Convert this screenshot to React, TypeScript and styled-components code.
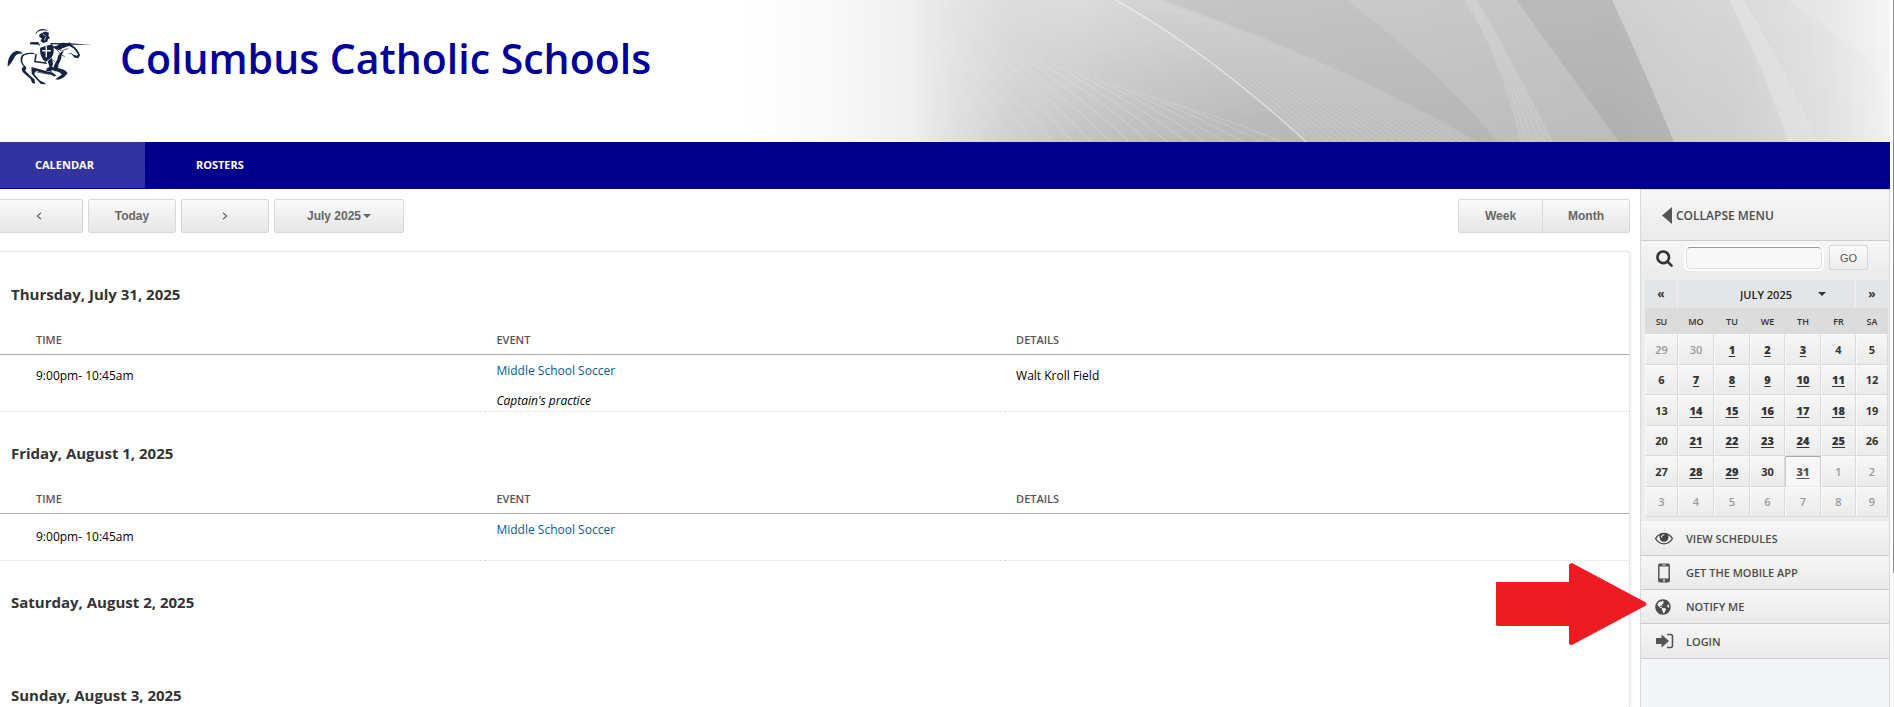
import React from "react";
import styled, { createGlobalStyle, css } from "styled-components";
import { FaGlobeAmericas } from "react-icons/fa";

const sans = `"Open Sans", "Noto Sans", sans-serif`;
const arial = `"Liberation Sans", Arial, sans-serif`;

const GlobalStyle = createGlobalStyle`
  *, *::before, *::after { box-sizing: border-box; }
  html, body { margin: 0; background: #fff; }
  body { font-family: ${sans}; font-size: 12px; color: #000; overflow: hidden; }
  a { color: inherit; text-decoration: none; }
  h1, h2, ul { margin: 0; padding: 0; }
  ul { list-style: none; }
`;

const Page = styled.div`
  display: grid;
  grid-template-columns: minmax(0, 1fr) 4px;
  height: 100vh;
  overflow: hidden;
`;

const Site = styled.div`
  display: flex;
  flex-direction: column;
  min-height: 0;
`;

const ScrollTrack = styled.div`
  border-right: 1px solid #f4f4f4;
  background: #fff;
`;

const ScrollThumb = styled.div`
  height: 81%;
  width: 4px;
  border-right: 1px solid #8a8a8a;
`;

/* Banner */

const Banner = styled.header`
  display: grid;
  flex: none;
  height: 142px;
  > * {
    grid-area: 1 / 1;
  }
`;

const BannerArt = styled.svg`
  justify-self: end;
  width: 61%;
  height: 142px;
`;

const Brand = styled.div`
  display: flex;
  align-items: flex-start;
  gap: 22px;
  padding-top: 20px;
`;

const Title = styled.h1`
  padding-top: 12px;
  font-size: 41px;
  line-height: 52px;
  font-weight: 600;
  color: #000099;
`;

/* Main navigation */

const NavBar = styled.nav`
  flex: none;
  overflow: hidden;
  background: #00008b;
  padding-bottom: 1px;
`;

const NavList = styled.ul`
  display: flex;
  margin-left: -16px;
`;

const NavLink = styled.a<{ $active?: boolean }>`
  display: block;
  padding: 0 51px;
  line-height: 46px;
  font-size: 11px;
  font-weight: 700;
  color: #fff;
  background: ${(p) => (p.$active ? "#3232a0" : "transparent")};
`;

/* Body columns */

const Body = styled.div`
  display: grid;
  grid-template-columns: minmax(0, 1fr) 250px;
  column-gap: 10px;
  flex: 1;
  min-height: 0;
`;

const Main = styled.main`
  display: flex;
  flex-direction: column;
  min-width: 0;
  min-height: 0;
`;

const Toolbar = styled.div`
  display: flex;
  gap: 5px;
  flex: none;
  margin: 10px 0 18px -5px;
`;

const raised = css`
  border: 1px solid #d8d8d8;
  background: linear-gradient(#fafafa, #e6e6e6);
  font-family: ${arial};
  font-weight: 700;
  font-size: 12px;
  color: #666;
`;

const ToolButton = styled.button`
  ${raised}
  display: flex;
  align-items: center;
  justify-content: center;
  width: 88px;
  height: 34px;
  padding: 0;
  border-radius: 2px;
`;

const MonthPicker = styled.div`
  display: grid;
  align-items: center;
  width: 130px;
  height: 34px;
  > * {
    grid-area: 1 / 1;
  }
  svg {
    justify-self: end;
    margin-right: 33px;
    pointer-events: none;
  }
`;

const MonthSelect = styled.select`
  ${raised}
  appearance: none;
  width: 100%;
  height: 34px;
  padding: 0 0 0 32px;
  border-radius: 2px;
`;

const ViewSwitch = styled.div`
  display: flex;
  margin-left: auto;
  ${ToolButton} {
    width: 85px;
  }
  ${ToolButton} + ${ToolButton} {
    width: 88px;
    margin-left: -1px;
    border-radius: 0 2px 2px 0;
  }
`;

const Agenda = styled.div`
  flex: 1;
  min-height: 0;
  padding-top: 1px;
  overflow: hidden;
  border: solid #e4e4e4;
  border-width: 1px 1px 0 0;
  border-top-right-radius: 4px;
  box-shadow: 1px 0 3px rgba(0, 0, 0, 0.08);
`;

const Day = styled.section`
  min-height: 93px;
`;

const DayTitle = styled.h2`
  padding: 30px 11px 0;
  font-size: 15px;
  line-height: 22px;
  font-weight: 700;
  color: #333;
`;

const EventTable = styled.table`
  width: 100%;
  margin-top: 22px;
  border-collapse: separate;
  border-spacing: 0;
  table-layout: fixed;
  th,
  td {
    padding: 0 11px;
    text-align: left;
  }
  th:first-child,
  td:first-child {
    padding-left: 36px;
  }
`;

const HeadCell = styled.th<{ $w?: string }>`
  width: ${(p) => p.$w ?? "auto"};
  height: 28px;
  border-bottom: 1px solid #aaa;
  vertical-align: top;
  font-size: 11px;
  line-height: 26px;
  font-weight: 600;
  color: #555;
`;

const Cell = styled.td<{ $tall?: boolean }>`
  height: ${(p) => (p.$tall ? 57 : 47)}px;
  border-bottom: 1px dotted #ddd;
  vertical-align: ${(p) => (p.$tall ? "top" : "middle")};
  font-size: 12px;
  line-height: ${(p) => (p.$tall ? 42 : 20)}px;
`;

const EventCell = styled(Cell)`
  vertical-align: top;
  line-height: 20px;
`;

const EventLink = styled.a`
  display: block;
  padding-top: 6px;
  color: #0b5a94;
`;

const EventNote = styled.em`
  display: block;
  padding-top: 10px;
`;

/* Sidebar */

const Sidebar = styled.aside`
  display: flex;
  flex-direction: column;
  border: solid #d9dadc;
  border-width: 1px 1px 0 1px;
  background: #f4f5f8;
`;

const Collapse = styled.button`
  display: flex;
  align-items: center;
  gap: 4px;
  height: 51px;
  padding: 0 0 0 21px;
  border: 0;
  border-bottom: 1px solid #ccc;
  background: linear-gradient(#f7f7f7, #ebebeb);
  font-family: ${sans};
  font-size: 12px;
  font-weight: 600;
  color: #4c4c4c;
`;

const Search = styled.form`
  display: flex;
  align-items: center;
  height: 35px;
  padding: 0 0 2px 14px;
  background: linear-gradient(#f6f6f6, #ebebeb);
`;

const SearchBox = styled.input`
  width: 136px;
  height: 22px;
  margin: 0 7px 0 12px;
  border: 1px solid #ddd;
  border-top: 1px solid #999;
  border-radius: 4px;
  outline: 2px solid #fff;
  background: #f8f8f8;
  font-family: ${sans};
  font-size: 12px;
`;

const GoButton = styled.button`
  width: 39px;
  height: 25px;
  padding: 0;
  border: 1px solid #d6d6d6;
  border-radius: 2px;
  background: linear-gradient(#fafafa, #ececec);
  font-family: ${arial};
  font-size: 11px;
  color: #555;
`;

const CalendarBox = styled.div`
  padding: 4px 1px 4px 4px;
  background: #ebecec;
`;

const CalendarBar = styled.div`
  display: grid;
  grid-template-columns: 32px 1fr 32px;
  height: 28px;
  background: #e4e5e7;
`;

const StepButton = styled.button`
  padding: 0 0 2px;
  border: 0;
  background: none;
  font-family: ${sans};
  font-size: 12px;
  font-weight: 700;
  color: #333;
`;

const BarPicker = styled.div`
  display: grid;
  align-items: center;
  border: solid #f0f0f2;
  border-width: 0 1px;
  > * {
    grid-area: 1 / 1;
  }
  svg {
    justify-self: end;
    margin-right: 29px;
    pointer-events: none;
  }
`;

const BarSelect = styled.select`
  appearance: none;
  width: 100%;
  height: 28px;
  padding: 0 0 0 62px;
  border: 0;
  background: transparent;
  font-family: ${sans};
  font-size: 11px;
  font-weight: 600;
  color: #222;
`;

const Calendar = styled.table`
  width: 100%;
  height: 209px;
  border-collapse: separate;
  border-spacing: 0;
  table-layout: fixed;
  th {
    height: 26px;
    padding: 0;
    background: #dcdcdc;
    font-size: 9px;
    font-weight: 600;
    color: #333;
  }
`;

const DateCell = styled.td<{ $dim?: boolean; $today?: boolean }>`
  padding: 0;
  border: solid;
  border-width: 1px;
  border-color: #fafafa #dadada #dadada #fafafa;
  background: linear-gradient(#f6f6f6, #ebebeb);
  text-align: center;
  font-size: 11px;
  line-height: 15px;
  font-weight: ${(p) => (p.$dim ? 600 : 700)};
  color: ${(p) => (p.$dim ? "#999" : "#333")};
  a {
    font-weight: 800;
    text-decoration: underline;
    text-underline-offset: 2px;
  }
  ${(p) =>
    p.$today &&
    css`
      border-color: #aaa #ccc #e8e8e8 #ccc;
      background: #f7f7f7;
      color: #555;
    `}
`;

const Menu = styled.ul`
  display: grid;
  grid-template-rows: 35px 34px 34px 35px;
`;

const MenuItem = styled.li`
  position: relative;
  display: grid;
`;

const MenuLink = styled.a`
  display: grid;
  grid-template-columns: 19px 1fr;
  column-gap: 12px;
  align-items: center;
  padding: 0 14px;
  border-bottom: 1px solid #ccc;
  background: linear-gradient(#f6f6f6, #eaeaea);
  font-size: 11px;
  font-weight: 600;
  color: #4c4c4c;
`;

const Pointer = styled.svg`
  position: absolute;
  top: -27px;
  right: 242px;
`;

const Caret = ({ color = "#666" }: { color?: string }) => (
  <svg width="8" height="4" viewBox="0 0 8 4" aria-hidden="true">
    <path d="M0 0h8L4 4z" fill={color} />
  </svg>
);

const Chevron = ({ flip }: { flip?: boolean }) => (
  <svg width="6" height="8" viewBox="0 0 6 8" aria-hidden="true">
    <path
      d={flip ? "M1 .7 4.6 4 1 7.3" : "M5 .7 1.4 4 5 7.3"}
      fill="none"
      stroke="#666"
      strokeWidth="1.2"
    />
  </svg>
);

const Knight = () => (
  <svg width="98" height="71" viewBox="0 0 288 210" role="img" aria-label="Knight on horseback">
    <g fill="#12243f">
      <path d="M102 43C108 30 122 23 135 28l9 6c-12-6-29-4-37 5z" />
      <path d="M116 42l16-8 12 4-2 8 5 8-6 2-2 8-12 4-8-6 4-8-8-4z" />
      <path d="M88 66l24-1 4 4 2 10-4-6-26-1z" />
      <path d="M148 68l55 1 68 4-68 0-55-1z" />
      <path d="M118 82l34-10c8 8 8 28 0 38l-18 14c-12-8-18-24-16-42z" />
      <path d="M103 101l-3 24 38 5-2-5-31-4 3-20z" />
      <path d="M140 122l12-10 4 18-6 18 3 5-19-2 5-9 6-4z" />
      <path d="M22 138c-1-16 4-32 15-41 9-8 23-6 30 2-10-1-17 1-22 7-7 10-10 21-23 32z" />
      <path d="M152 74c9 6 14 4 22-2 8-7 18-5 27-3l3-4 5 7c12 7 22 18 27 32l-6 9-11-2-8-10-13-2 12-1 7 5 8 3 5-3c-5-11-12-20-22-24-10-4-15 3-23 4-9 8-17 8-33-5z" />
      <path d="M188 92l-7 13c0 16-10 22-11 37 13 2 23 6 29 15-6 9-15 17-28 20l-8-2 19-14c-4-7-14-9-24-10-4-14 7-26 11-36 2-12 7-19 19-23z" />
      <path d="M63 105c9-8 22-8 35-8l5 4c-13-1-27-1-35 6-5 9-4 19 2 26 8 7 9 10 3 16 8 8 18 18 28 26l2 13-8-1-6-13-23-20-3-10 6-7c-9-9-12-21-6-32z" />
      <path d="M92 139l22 6 28 8c12 2 18 5 24 11l-6 3c-10-8-25-9-38-12l-16-4-6 9 17 19 16 8 1 3-14-1-9-9-18-20z" />
      <path d="M150 137l9 4 15-4-10 10-16 2z" />
    </g>
    <g stroke="#fff" strokeWidth="4" fill="none">
      <path d="M136 78v32M124 91h25" />
    </g>
    <g stroke="#fff" strokeWidth="2" fill="none">
      <path d="M126 42l10 6-6 12M112 68l7 4M140 128l4 12M206 78l-10 9 10 12M216 85l-9 10" />
    </g>
    <g stroke="#12243f" strokeWidth="2" fill="none">
      <path d="M164 85l18 19 9 4M155 79l26 12 20-7M131 47l10 2M108 154l34 6 12-5M152 116l10 8" />
    </g>
  </svg>
);

const range = (n: number) => Array.from({ length: n }, (_, i) => i);

const Art = () => (
  <BannerArt viewBox="0 0 1154 142" preserveAspectRatio="none" aria-hidden="true">
    <defs>
      <linearGradient id="base" x1="0" x2="1" y1="0" y2="0">
        <stop offset="0" stopColor="#fff" />
        <stop offset=".08" stopColor="#f9f9f9" />
        <stop offset=".15" stopColor="#f0f0f0" />
        <stop offset=".19" stopColor="#e2e2e2" />
        <stop offset=".24" stopColor="#d4d4d4" />
        <stop offset=".32" stopColor="#cacaca" />
        <stop offset=".42" stopColor="#c5c5c5" />
        <stop offset=".76" stopColor="#c0c0c0" />
        <stop offset=".86" stopColor="#cacaca" />
        <stop offset=".94" stopColor="#dedede" />
        <stop offset="1" stopColor="#f4f4f4" />
      </linearGradient>
      <linearGradient id="shade" x1="0" x2="0" y1="0" y2="1">
        <stop offset="0" stopColor="#000" stopOpacity="0" />
        <stop offset="1" stopColor="#000" stopOpacity=".06" />
      </linearGradient>
      <linearGradient id="glow" x1="0" x2=".7" y1="0" y2="1">
        <stop offset="0" stopColor="#fff" stopOpacity=".4" />
        <stop offset="1" stopColor="#fff" stopOpacity="0" />
      </linearGradient>
      <linearGradient id="fade" x1="0" x2="1" y1="0" y2="0">
        <stop offset=".15" stopColor="#000" />
        <stop offset=".3" stopColor="#fff" />
        <stop offset=".84" stopColor="#fff" />
        <stop offset="1" stopColor="#444" />
      </linearGradient>
      <mask id="soft">
        <rect width="1154" height="142" fill="url(#fade)" />
      </mask>
    </defs>
    <rect width="1154" height="142" fill="url(#base)" />
    <g mask="url(#soft)">
      <rect width="1154" height="142" fill="url(#shade)" />
      <path d="M150 0H379Q468 49 570 142H150z" fill="url(#glow)" />
      <g stroke="#fff" strokeOpacity=".17" strokeWidth="1.200" fill="none">
        {range(18).map((i) => (
          <path key={i} d={`M${110 + i * 19} ${i * 6}Q${175 + i * 19} ${70 + i * 3} ${222 + i * 19} 142`} />
        ))}
      </g>
      <path d="M379 0Q468 49 570 142H740Q602 62 416 0z" fill="#fff" fillOpacity=".08" />
      <g stroke="#fff" fill="none" strokeOpacity=".16" strokeWidth="1">
        {range(24).map((i) => (
          <path
            key={i}
            d={`M${379 + i * 2} 0Q${468 + i * 6} ${49 + i * 0.6} ${570 + i * 7.4} 142`}
          />
        ))}
      </g>
      <path d="M379 0Q468 49 570 142" fill="none" stroke="#fff" strokeOpacity=".45" strokeWidth="1.500" />
      <path d="M610 0Q697 65 762 142H883L780 0z" fill="#fff" fillOpacity=".1" />
      <path d="M728 0Q767 60 784 142H817Q775 60 740 0z" fill="#fff" fillOpacity=".1" />
      <g stroke="#fff" strokeOpacity=".14" fill="none">
        {range(6).map((i) => (
          <path key={i} d={`M${730 + i * 2} 0Q${764 + i * 2} 55 ${785 + i * 6} 142`} />
        ))}
      </g>
      <path d="M780 0L883 142H938Q911 76 876 0z" fill="#000" fillOpacity=".03" />
      <path d="M876 0Q911 76 938 142H1154V0z" fill="#fff" fillOpacity=".25" />
      <path d="M993 0Q1029 71 1052 142H1154V0z" fill="#fff" fillOpacity=".08" />
      <path d="M993 0Q1029 71 1052 142H1082Q1050 71 1008 0z" fill="#fff" fillOpacity=".2" />
      <path d="M1052 0Q1110 40 1154 80V0z" fill="#fff" fillOpacity=".25" />
    </g>
  </BannerArt>
);

const EyeIcon = () => (
  <svg width="18" height="18" viewBox="0 0 1792 1792" fill="#444" aria-hidden="true">
    <path d="M1664 960q-152-236-381-353 61 104 61 225 0 185-131.5 316.5t-316.5 131.5-316.5-131.5-131.5-316.5q0-121 61-225-229 117-381 353 133 205 333.5 326.5t434.5 121.5 434.5-121.5 333.5-326.5zm-720-384q0-20-14-34t-34-14q-125 0-214.5 89.5t-89.5 214.5q0 20 14 34t34 14 34-14 14-34q0-86 61-147t147-61q20 0 34-14t14-34zm848 384q0 34-20 69-140 230-376.5 368.5t-499.5 138.5-499.5-139-376.5-368q-20-35-20-69t20-69q140-229 376.5-368t499.5-139 499.5 139 376.5 368q20 35 20 69z" />
  </svg>
);

const PhoneIcon = () => (
  <svg width="18" height="20" viewBox="0 0 18 20" aria-hidden="true">
    <path
      fill="#555"
      fillRule="evenodd"
      d="M5 .5h8a2 2 0 0 1 2 2v15a2 2 0 0 1-2 2H5a2 2 0 0 1-2-2v-15a2 2 0 0 1 2-2zM4.500 3.500v12h9v-12zM7.500 1.500v1h3v-1zM9 16.500a1 1 0 1 0 0 2 1 1 0 0 0 0-2z"
    />
  </svg>
);

const LoginIcon = () => (
  <svg width="19" height="16" viewBox="0 0 19 16" aria-hidden="true">
    <path d="M1 5h5.500V1.500L14 8l-7.500 6.500V11H1z" fill="#555" />
    <path d="M12 1.500h3.500q2 0 2 2v9q0 2-2 2H12" fill="none" stroke="#555" strokeWidth="1.600" />
  </svg>
);

const SearchIcon = () => (
  <svg width="19" height="18" viewBox="0 0 1792 1792" fill="#333" aria-hidden="true">
    <path d="M1216 832q0-185-131.5-316.5t-316.5-131.5-316.5 131.5-131.5 316.5 131.5 316.5 316.5 131.5 316.5-131.5 131.5-316.5zm512 832q0 52-38 90t-90 38q-54 0-90-38l-343-342q-179 124-399 124-143 0-273.5-55.5t-225-150-150-225-55.5-273.5 55.5-273.5 150-225 225-150 273.5-55.5 273.5 55.5 225 150 150 225 55.5 273.5q0 220-124 399l343 343q37 37 37 90z" />
  </svg>
);

type EventRow = { time: string; name: string; note?: string; details?: string };

const days: { title: string; events: EventRow[] }[] = [
  {
    title: "Thursday, July 31, 2025",
    events: [
      {
        time: "9:00pm- 10:45am",
        name: "Middle School Soccer",
        note: "Captain's practice",
        details: "Walt Kroll Field",
      },
    ],
  },
  {
    title: "Friday, August 1, 2025",
    events: [{ time: "9:00pm- 10:45am", name: "Middle School Soccer" }],
  },
  { title: "Saturday, August 2, 2025", events: [] },
  { title: "Sunday, August 3, 2025", events: [] },
];

const busy = new Set([1, 2, 3, 7, 8, 9, 10, 11, 14, 15, 16, 17, 18, 21, 22, 23, 24, 25, 28, 29, 31]);

/* The grid opens on Sunday, June 29. */
const weeks = range(6).map((w) =>
  range(7).map((d) => {
    const n = w * 7 + d - 1;
    if (n < 1) return { day: 30 + n, current: false };
    if (n > 31) return { day: n - 31, current: false };
    return { day: n, current: true };
  })
);

const columnWidths = [33, 36, 36, 35, 36, 35, 32];

const menu = [
  { label: "VIEW SCHEDULES", icon: <EyeIcon /> },
  { label: "GET THE MOBILE APP", icon: <PhoneIcon /> },
  { label: "NOTIFY ME", icon: <FaGlobeAmericas size={16} />, marked: true },
  { label: "LOGIN", icon: <LoginIcon /> },
];

export default function App() {
  return (
    <Page>
      <GlobalStyle />
      <Site>
        <Banner>
          <Art />
          <Brand>
            <Knight />
            <Title>Columbus Catholic Schools</Title>
          </Brand>
        </Banner>
        <NavBar>
          <NavList>
            <li>
              <NavLink href="#calendar" $active>
                CALENDAR
              </NavLink>
            </li>
            <li>
              <NavLink href="#rosters">ROSTERS</NavLink>
            </li>
          </NavList>
        </NavBar>
        <Body>
          <Main>
            <Toolbar>
              <ToolButton type="button" aria-label="Previous">
                <Chevron />
              </ToolButton>
              <ToolButton type="button">Today</ToolButton>
              <ToolButton type="button" aria-label="Next">
                <Chevron flip />
              </ToolButton>
              <MonthPicker>
                <MonthSelect aria-label="Month">
                  <option>July 2025</option>
                </MonthSelect>
                <Caret />
              </MonthPicker>
              <ViewSwitch>
                <ToolButton type="button">Week</ToolButton>
                <ToolButton type="button">Month</ToolButton>
              </ViewSwitch>
            </Toolbar>
            <Agenda>
              {days.map((day) => (
                <Day key={day.title}>
                  <DayTitle>{day.title}</DayTitle>
                  {day.events.length > 0 && (
                    <EventTable>
                      <thead>
                        <tr>
                          <HeadCell $w="29.8%">TIME</HeadCell>
                          <HeadCell $w="31.9%">EVENT</HeadCell>
                          <HeadCell>DETAILS</HeadCell>
                        </tr>
                      </thead>
                      <tbody>
                        {day.events.map((e) => (
                          <tr key={e.name}>
                            <Cell $tall={!!e.note}>{e.time}</Cell>
                            <EventCell $tall={!!e.note}>
                              <EventLink href="#event">{e.name}</EventLink>
                              {e.note && <EventNote>{e.note}</EventNote>}
                            </EventCell>
                            <Cell $tall={!!e.note}>{e.details}</Cell>
                          </tr>
                        ))}
                      </tbody>
                    </EventTable>
                  )}
                </Day>
              ))}
            </Agenda>
          </Main>
          <Sidebar>
            <Collapse type="button">
              <svg width="10" height="17" viewBox="0 0 10 17" aria-hidden="true">
                <path d="M10 0v17L0 8.500z" fill="#555" />
              </svg>
              COLLAPSE MENU
            </Collapse>
            <Search>
              <SearchIcon />
              <SearchBox type="text" aria-label="Search" />
              <GoButton type="button">GO</GoButton>
            </Search>
            <CalendarBox>
              <CalendarBar>
                <StepButton type="button" aria-label="Previous month">«</StepButton>
                <BarPicker>
                  <BarSelect aria-label="Calendar month">
                    <option>JULY 2025</option>
                  </BarSelect>
                  <Caret color="#333" />
                </BarPicker>
                <StepButton type="button" aria-label="Next month">»</StepButton>
              </CalendarBar>
              <Calendar>
                <colgroup>
                  {columnWidths.map((w, i) => (
                    <col key={i} width={w} />
                  ))}
                </colgroup>
                <thead>
                  <tr>
                    {["SU", "MO", "TU", "WE", "TH", "FR", "SA"].map((d) => (
                      <th key={d}>{d}</th>
                    ))}
                  </tr>
                </thead>
                <tbody>
                  {weeks.map((week, i) => (
                    <tr key={i}>
                      {week.map(({ day, current }) => (
                        <DateCell key={day} $dim={!current} $today={current && day === 31}>
                          {current && busy.has(day) ? <a href="#day">{day}</a> : day}
                        </DateCell>
                      ))}
                    </tr>
                  ))}
                </tbody>
              </Calendar>
            </CalendarBox>
            <Menu>
              {menu.map((item) => (
                <MenuItem key={item.label}>
                  <MenuLink href="#menu">
                    {item.icon}
                    {item.label}
                  </MenuLink>
                  {item.marked && (
                    <Pointer width="151" height="82" viewBox="0 0 151 82" aria-hidden="true">
                      <path
                        d="M0 19H73V2Q74 0 76 0L149 39Q152 41.500 149 43L76 82Q73 82 73 80V63H1L0 62z"
                        fill="#ed1c24"
                      />
                    </Pointer>
                  )}
                </MenuItem>
              ))}
            </Menu>
          </Sidebar>
        </Body>
      </Site>
      <ScrollTrack>
        <ScrollThumb />
      </ScrollTrack>
    </Page>
  );
}
